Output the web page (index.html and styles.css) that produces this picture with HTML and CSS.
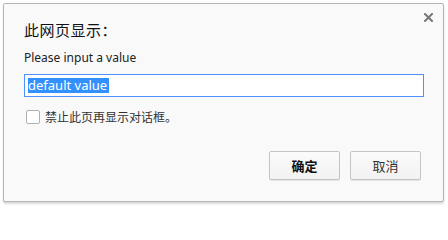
FILE: index.html
```html
<!DOCTYPE html>
<html>
<head>
<meta charset="utf-8">
<link rel="stylesheet" href="styles.css">
</head>
<body>
<div class="dialog">
  <div class="close" aria-label="close">
    <svg width="9" height="9" viewBox="0 0 9 9"><path d="M1 1L8 8M8 1L1 8" stroke="#777" stroke-width="2" stroke-linecap="square"/></svg>
  </div>
  <div class="title">此网页显示：</div>
  <div class="message">Please input a value</div>
  <div class="input"><span class="sel">default value</span></div>
  <label class="check"><span class="box"></span><span class="check-text">禁止此页再显示对话框。</span></label>
  <div class="buttons">
    <button class="btn primary">确定</button>
    <button class="btn">取消</button>
  </div>
</div>
</body>
</html>
```

FILE: styles.css
```css
html, body {
  margin: 0;
  padding: 0;
  background: #ffffff;
}
body {
  width: 448px;
  height: 206px;
  overflow: hidden;
  font-family: "Noto Sans", "Noto Sans CJK SC", sans-serif;
}
.dialog {
  position: relative;
  margin: 3px 0 0 3px;
  width: 439px;
  height: 197px;
  background: #f9f9f9;
  border: 1px solid #b5b5b5;
  border-radius: 2px;
  box-shadow: 0 2px 2px rgba(0,0,0,0.15);
  box-sizing: content-box;
  display: flex;
  flex-direction: column;
}
.close {
  position: absolute;
  top: 9px;
  right: 10px;
  width: 9px;
  height: 9px;
  display: flex;
}
.title {
  margin: 16px 0 0 20px;
  font-family: "Noto Sans CJK SC", sans-serif;
  font-size: 15px;
  line-height: 20px;
  letter-spacing: 0.5px;
  color: #111;
}
.message {
  margin: 10px 0 0 20px;
  font-size: 12px;
  line-height: 16px;
  color: #222;
}
.input {
  margin: 8px 0 0 20px;
  width: 400px;
  height: 23px;
  box-sizing: border-box;
  border: 1px solid #4d90fe;
  background: #fff;
  padding: 0 0 0 3px;
  display: flex;
  align-items: center;
  font-size: 13px;
}
.sel {
  background: #3390ff;
  color: #fff;
  line-height: 15px;
  padding: 0 2px 0 0;
}
.check {
  margin: 12px 0 0 22px;
  display: flex;
  align-items: center;
  gap: 5px;
}
.box {
  width: 14px;
  height: 14px;
  border: 1px solid #b0b0b0;
  border-radius: 2px;
  background: #fff;
  box-sizing: border-box;
}
.check-text {
  font-family: "Noto Sans CJK SC", sans-serif;
  font-size: 12px;
  line-height: 16px;
  color: #333;
}
.buttons {
  margin: 26px 22px 0 0;
  display: flex;
  justify-content: flex-end;
  gap: 10px;
}
.btn {
  width: 71px;
  height: 29px;
  box-sizing: border-box;
  border: 1px solid #c4c4c4;
  border-radius: 2px;
  background: linear-gradient(#fbfbfb, #f2f2f2);
  font-family: "Noto Sans CJK SC", sans-serif;
  font-size: 13px;
  color: #333;
  padding: 0;
  box-shadow: 0 1px 0 rgba(0,0,0,0.08);
}
.btn.primary {
  font-weight: bold;
  color: #111;
}
```
